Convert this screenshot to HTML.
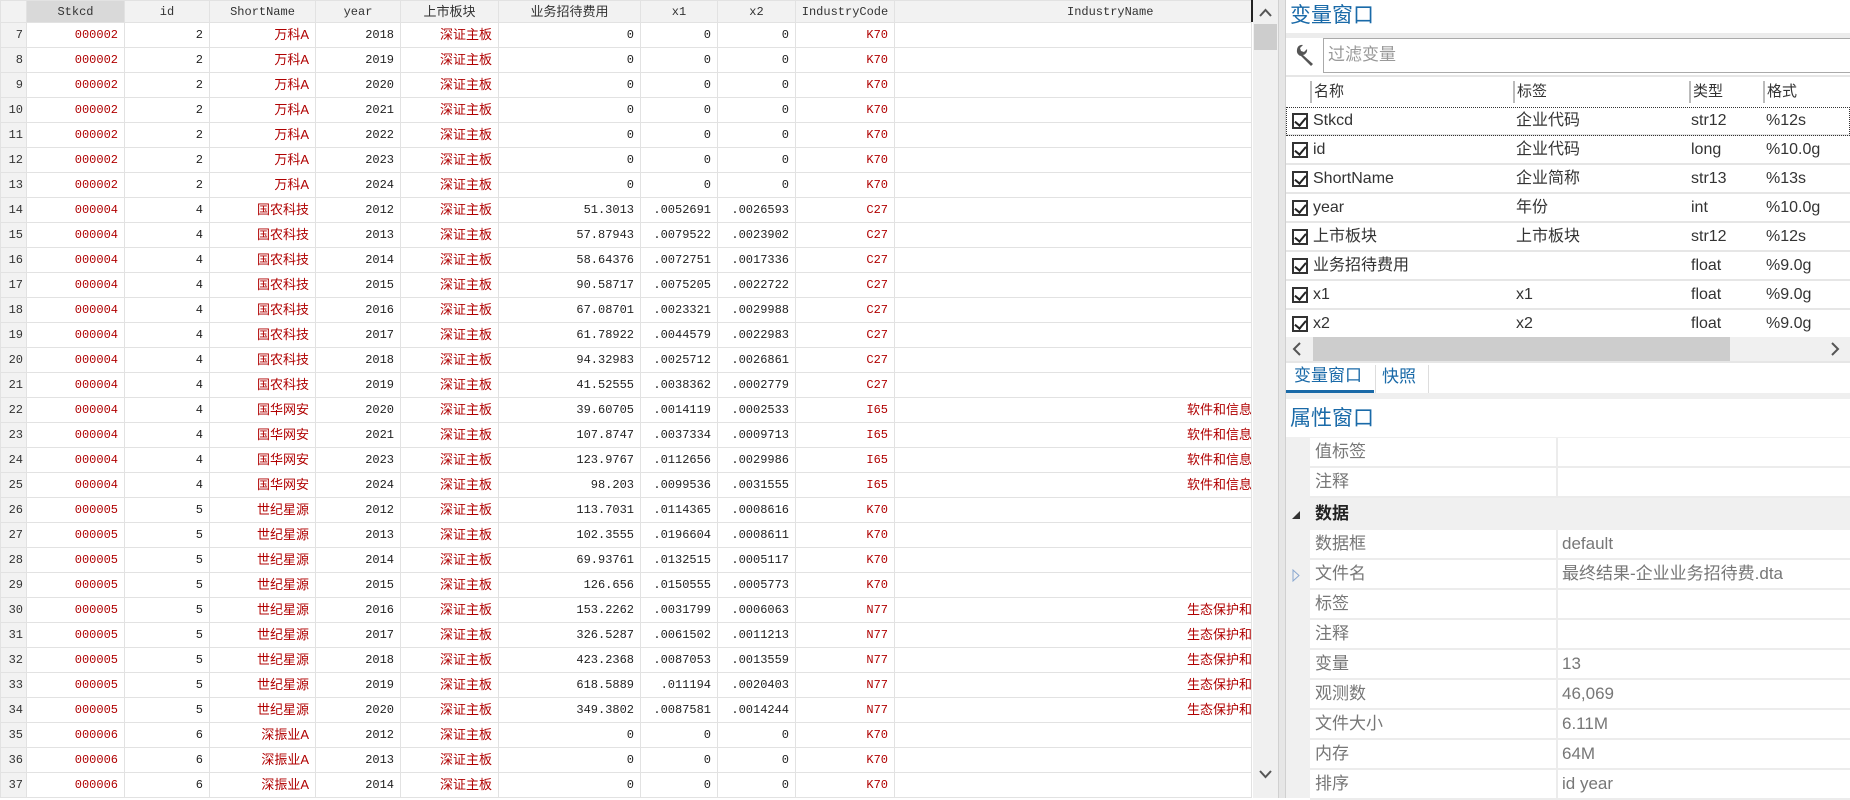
<!DOCTYPE html>
<html><head><meta charset="utf-8">
<style>
*{margin:0;padding:0;box-sizing:border-box}
body{width:1850px;height:798px;overflow:hidden;background:#fff;position:relative;font-family:"Liberation Sans","Noto Sans CJK SC",sans-serif}
#grid{position:absolute;left:0;top:0;width:1252px;height:798px;overflow:hidden;border-right:1px solid #e2e2e2}
table{border-collapse:collapse;table-layout:fixed;width:1330px;font-family:"Liberation Mono","Noto Sans CJK SC",monospace;font-size:12px}
td,th{border:1px solid #e2e2e2;height:25px;line-height:18px;text-align:right;padding:0 6px 0 0;white-space:nowrap;overflow:hidden;color:#222;font-weight:normal}
th{height:22px;background:#f2f2f2;text-align:center;padding:0;color:#333}
th.sel{background:#d9d9d9}
td:first-child{background:#f2f2f2;padding-right:3px;color:#333}
.r{color:#b00000}
.c{font-size:13px;font-family:"Liberation Sans","Noto Sans CJK SC",sans-serif}
td.n{padding-right:13px}
#vs{position:absolute;left:1253px;top:0;width:25px;height:798px;background:#f0f0f0}
#sep{position:absolute;left:1278px;top:0;width:8px;height:798px;background:#e6e6e6;border-left:1px solid #d0d0d0;border-right:1px solid #d0d0d0}
#rp{position:absolute;left:1286px;top:0;width:564px;height:798px;background:#fff}
.title{position:absolute;left:4px;font-size:21px;line-height:28px;color:#1a6aa8}
.band{position:absolute;left:0;width:564px;background:#ececec}
.vr{position:absolute;left:0;width:564px;height:29px;font-size:16px;color:#333;border-bottom:2px solid #e6e6e6}
.vr span{position:absolute;top:3px;line-height:22px;height:22px;display:block}
.cb{position:absolute;left:6px;top:6px;width:16px;height:16px;border:2px solid #333;background:#fff}
.cb:after{content:"";position:absolute;left:3px;top:0px;width:5px;height:9px;border:solid #222;border-width:0 2px 2px 0;transform:rotate(40deg)}
.pr{position:absolute;left:0;width:564px;height:30px;font-size:17px;color:#777}
.pr .n{position:absolute;left:24px;top:0;width:246px;height:30px;border-bottom:2px solid #ececec;padding:0 0 0 5px;line-height:28px;background:#fff}
.pr .v{position:absolute;left:270px;top:0;width:294px;height:30px;border-bottom:2px solid #ececec;border-left:2px solid #ececec;padding:0 0 0 4px;line-height:28px;background:#fff}
</style></head><body>
<div id="grid"><table>
<colgroup><col style="width:26px"><col style="width:98px"><col style="width:85px"><col style="width:106px"><col style="width:85px"><col style="width:98px"><col style="width:142px"><col style="width:77px"><col style="width:78px"><col style="width:99px"><col style="width:436px"></colgroup>
<tr><th></th><th class="sel">Stkcd</th><th>id</th><th>ShortName</th><th>year</th><th class="c">上市板块</th><th class="c">业务招待费用</th><th>x1</th><th>x2</th><th>IndustryCode</th><th style="text-align:left;padding-left:172px">IndustryName</th></tr>
<tr><td>7</td><td class="r">000002</td><td>2</td><td class="r c">万科A</td><td>2018</td><td class="r c">深证主板</td><td>0</td><td>0</td><td>0</td><td class="r">K70</td><td class="r c n">房地产业</td></tr>
<tr><td>8</td><td class="r">000002</td><td>2</td><td class="r c">万科A</td><td>2019</td><td class="r c">深证主板</td><td>0</td><td>0</td><td>0</td><td class="r">K70</td><td class="r c n">房地产业</td></tr>
<tr><td>9</td><td class="r">000002</td><td>2</td><td class="r c">万科A</td><td>2020</td><td class="r c">深证主板</td><td>0</td><td>0</td><td>0</td><td class="r">K70</td><td class="r c n">房地产业</td></tr>
<tr><td>10</td><td class="r">000002</td><td>2</td><td class="r c">万科A</td><td>2021</td><td class="r c">深证主板</td><td>0</td><td>0</td><td>0</td><td class="r">K70</td><td class="r c n">房地产业</td></tr>
<tr><td>11</td><td class="r">000002</td><td>2</td><td class="r c">万科A</td><td>2022</td><td class="r c">深证主板</td><td>0</td><td>0</td><td>0</td><td class="r">K70</td><td class="r c n">房地产业</td></tr>
<tr><td>12</td><td class="r">000002</td><td>2</td><td class="r c">万科A</td><td>2023</td><td class="r c">深证主板</td><td>0</td><td>0</td><td>0</td><td class="r">K70</td><td class="r c n">房地产业</td></tr>
<tr><td>13</td><td class="r">000002</td><td>2</td><td class="r c">万科A</td><td>2024</td><td class="r c">深证主板</td><td>0</td><td>0</td><td>0</td><td class="r">K70</td><td class="r c n">房地产业</td></tr>
<tr><td>14</td><td class="r">000004</td><td>4</td><td class="r c">国农科技</td><td>2012</td><td class="r c">深证主板</td><td>51.3013</td><td>.0052691</td><td>.0026593</td><td class="r">C27</td><td class="r c n">医药制造业</td></tr>
<tr><td>15</td><td class="r">000004</td><td>4</td><td class="r c">国农科技</td><td>2013</td><td class="r c">深证主板</td><td>57.87943</td><td>.0079522</td><td>.0023902</td><td class="r">C27</td><td class="r c n">医药制造业</td></tr>
<tr><td>16</td><td class="r">000004</td><td>4</td><td class="r c">国农科技</td><td>2014</td><td class="r c">深证主板</td><td>58.64376</td><td>.0072751</td><td>.0017336</td><td class="r">C27</td><td class="r c n">医药制造业</td></tr>
<tr><td>17</td><td class="r">000004</td><td>4</td><td class="r c">国农科技</td><td>2015</td><td class="r c">深证主板</td><td>90.58717</td><td>.0075205</td><td>.0022722</td><td class="r">C27</td><td class="r c n">医药制造业</td></tr>
<tr><td>18</td><td class="r">000004</td><td>4</td><td class="r c">国农科技</td><td>2016</td><td class="r c">深证主板</td><td>67.08701</td><td>.0023321</td><td>.0029988</td><td class="r">C27</td><td class="r c n">医药制造业</td></tr>
<tr><td>19</td><td class="r">000004</td><td>4</td><td class="r c">国农科技</td><td>2017</td><td class="r c">深证主板</td><td>61.78922</td><td>.0044579</td><td>.0022983</td><td class="r">C27</td><td class="r c n">医药制造业</td></tr>
<tr><td>20</td><td class="r">000004</td><td>4</td><td class="r c">国农科技</td><td>2018</td><td class="r c">深证主板</td><td>94.32983</td><td>.0025712</td><td>.0026861</td><td class="r">C27</td><td class="r c n">医药制造业</td></tr>
<tr><td>21</td><td class="r">000004</td><td>4</td><td class="r c">国农科技</td><td>2019</td><td class="r c">深证主板</td><td>41.52555</td><td>.0038362</td><td>.0002779</td><td class="r">C27</td><td class="r c n">医药制造业</td></tr>
<tr><td>22</td><td class="r">000004</td><td>4</td><td class="r c">国华网安</td><td>2020</td><td class="r c">深证主板</td><td>39.60705</td><td>.0014119</td><td>.0002533</td><td class="r">I65</td><td class="r c n">软件和信息技术服务业</td></tr>
<tr><td>23</td><td class="r">000004</td><td>4</td><td class="r c">国华网安</td><td>2021</td><td class="r c">深证主板</td><td>107.8747</td><td>.0037334</td><td>.0009713</td><td class="r">I65</td><td class="r c n">软件和信息技术服务业</td></tr>
<tr><td>24</td><td class="r">000004</td><td>4</td><td class="r c">国华网安</td><td>2023</td><td class="r c">深证主板</td><td>123.9767</td><td>.0112656</td><td>.0029986</td><td class="r">I65</td><td class="r c n">软件和信息技术服务业</td></tr>
<tr><td>25</td><td class="r">000004</td><td>4</td><td class="r c">国华网安</td><td>2024</td><td class="r c">深证主板</td><td>98.203</td><td>.0099536</td><td>.0031555</td><td class="r">I65</td><td class="r c n">软件和信息技术服务业</td></tr>
<tr><td>26</td><td class="r">000005</td><td>5</td><td class="r c">世纪星源</td><td>2012</td><td class="r c">深证主板</td><td>113.7031</td><td>.0114365</td><td>.0008616</td><td class="r">K70</td><td class="r c n">房地产业</td></tr>
<tr><td>27</td><td class="r">000005</td><td>5</td><td class="r c">世纪星源</td><td>2013</td><td class="r c">深证主板</td><td>102.3555</td><td>.0196604</td><td>.0008611</td><td class="r">K70</td><td class="r c n">房地产业</td></tr>
<tr><td>28</td><td class="r">000005</td><td>5</td><td class="r c">世纪星源</td><td>2014</td><td class="r c">深证主板</td><td>69.93761</td><td>.0132515</td><td>.0005117</td><td class="r">K70</td><td class="r c n">房地产业</td></tr>
<tr><td>29</td><td class="r">000005</td><td>5</td><td class="r c">世纪星源</td><td>2015</td><td class="r c">深证主板</td><td>126.656</td><td>.0150555</td><td>.0005773</td><td class="r">K70</td><td class="r c n">房地产业</td></tr>
<tr><td>30</td><td class="r">000005</td><td>5</td><td class="r c">世纪星源</td><td>2016</td><td class="r c">深证主板</td><td>153.2262</td><td>.0031799</td><td>.0006063</td><td class="r">N77</td><td class="r c n">生态保护和环境治理业</td></tr>
<tr><td>31</td><td class="r">000005</td><td>5</td><td class="r c">世纪星源</td><td>2017</td><td class="r c">深证主板</td><td>326.5287</td><td>.0061502</td><td>.0011213</td><td class="r">N77</td><td class="r c n">生态保护和环境治理业</td></tr>
<tr><td>32</td><td class="r">000005</td><td>5</td><td class="r c">世纪星源</td><td>2018</td><td class="r c">深证主板</td><td>423.2368</td><td>.0087053</td><td>.0013559</td><td class="r">N77</td><td class="r c n">生态保护和环境治理业</td></tr>
<tr><td>33</td><td class="r">000005</td><td>5</td><td class="r c">世纪星源</td><td>2019</td><td class="r c">深证主板</td><td>618.5889</td><td>.011194</td><td>.0020403</td><td class="r">N77</td><td class="r c n">生态保护和环境治理业</td></tr>
<tr><td>34</td><td class="r">000005</td><td>5</td><td class="r c">世纪星源</td><td>2020</td><td class="r c">深证主板</td><td>349.3802</td><td>.0087581</td><td>.0014244</td><td class="r">N77</td><td class="r c n">生态保护和环境治理业</td></tr>
<tr><td>35</td><td class="r">000006</td><td>6</td><td class="r c">深振业A</td><td>2012</td><td class="r c">深证主板</td><td>0</td><td>0</td><td>0</td><td class="r">K70</td><td class="r c n">房地产业</td></tr>
<tr><td>36</td><td class="r">000006</td><td>6</td><td class="r c">深振业A</td><td>2013</td><td class="r c">深证主板</td><td>0</td><td>0</td><td>0</td><td class="r">K70</td><td class="r c n">房地产业</td></tr>
<tr><td>37</td><td class="r">000006</td><td>6</td><td class="r c">深振业A</td><td>2014</td><td class="r c">深证主板</td><td>0</td><td>0</td><td>0</td><td class="r">K70</td><td class="r c n">房地产业</td></tr>
</table></div>
<div style="position:absolute;left:1251px;top:0;width:2px;height:22px;background:#222"></div>

<div id="vs">
<svg style="position:absolute;left:6px;top:8px" width="13" height="9"><path d="M1 8 L6.5 2 L12 8" fill="none" stroke="#555" stroke-width="2"/></svg>
<div style="position:absolute;left:1px;top:24px;width:23px;height:26px;background:#cdcdcd"></div>
<svg style="position:absolute;left:6px;top:770px" width="13" height="9"><path d="M1 1 L6.5 7 L12 1" fill="none" stroke="#555" stroke-width="2"/></svg>
</div>
<div id="sep"></div>

<div id="rp">
<div class="title" style="top:2px">变量窗口</div>
<div class="band" style="top:33px;height:5px"></div>
<svg style="position:absolute;left:8px;top:44px" width="22" height="22" viewBox="0 0 22 22"><path d="M3 6 A5 5 0 0 1 9 1 L6 4 L7 7 L10 8 L13 5 A5 5 0 0 1 9 11 L19 20 L17 22 L7 12 A5 5 0 0 1 3 6Z" fill="#555"/></svg>
<div style="position:absolute;left:37px;top:38px;width:527px;height:35px;border:1px solid #aaa;border-right:none;font-size:17px;line-height:32px;color:#999;padding:0 0 0 4px">过滤变量</div>
<div style="position:absolute;left:0;top:75px;width:564px;height:2px;background:#e6e6e6"></div>
<div style="position:absolute;left:0;top:77px;width:564px;height:30px;font-size:15px;line-height:22px;color:#333">
<div style="position:absolute;left:24px;top:4px;width:2px;height:22px;background:#bbb"></div><span style="position:absolute;left:28px;top:4px">名称</span>
<div style="position:absolute;left:227px;top:4px;width:2px;height:22px;background:#bbb"></div><span style="position:absolute;left:231px;top:4px">标签</span>
<div style="position:absolute;left:403px;top:4px;width:2px;height:22px;background:#bbb"></div><span style="position:absolute;left:407px;top:4px">类型</span>
<div style="position:absolute;left:477px;top:4px;width:2px;height:22px;background:#bbb"></div><span style="position:absolute;left:481px;top:4px">格式</span>
</div>
<div class="vr" style="top:107px"><div class="cb"></div><span style="left:27px">Stkcd</span><span style="left:230px">企业代码</span><span style="left:405px">str12</span><span style="left:480px">%12s</span></div>
<div style="position:absolute;left:0;top:107px;width:564px;height:29px;border:1px dotted #333"></div>
<div class="vr" style="top:136px"><div class="cb"></div><span style="left:27px">id</span><span style="left:230px">企业代码</span><span style="left:405px">long</span><span style="left:480px">%10.0g</span></div>
<div class="vr" style="top:165px"><div class="cb"></div><span style="left:27px">ShortName</span><span style="left:230px">企业简称</span><span style="left:405px">str13</span><span style="left:480px">%13s</span></div>
<div class="vr" style="top:194px"><div class="cb"></div><span style="left:27px">year</span><span style="left:230px">年份</span><span style="left:405px">int</span><span style="left:480px">%10.0g</span></div>
<div class="vr" style="top:223px"><div class="cb"></div><span style="left:27px">上市板块</span><span style="left:230px">上市板块</span><span style="left:405px">str12</span><span style="left:480px">%12s</span></div>
<div class="vr" style="top:252px"><div class="cb"></div><span style="left:27px">业务招待费用</span><span style="left:405px">float</span><span style="left:480px">%9.0g</span></div>
<div class="vr" style="top:281px"><div class="cb"></div><span style="left:27px">x1</span><span style="left:230px">x1</span><span style="left:405px">float</span><span style="left:480px">%9.0g</span></div>
<div class="vr" style="top:310px;border-bottom:none"><div class="cb"></div><span style="left:27px">x2</span><span style="left:230px">x2</span><span style="left:405px">float</span><span style="left:480px">%9.0g</span></div>
<div style="position:absolute;left:0;top:337px;width:564px;height:24px;background:#f0f0f0">
<svg style="position:absolute;left:6px;top:5px" width="9" height="14"><path d="M8 1 L2 7 L8 13" fill="none" stroke="#555" stroke-width="2"/></svg>
<div style="position:absolute;left:27px;top:0;width:417px;height:24px;background:#cdcdcd"></div>
<svg style="position:absolute;left:545px;top:5px" width="9" height="14"><path d="M1 1 L7 7 L1 13" fill="none" stroke="#555" stroke-width="2"/></svg>
</div>
<div class="band" style="top:361px;height:2px;background:#e6e6e6"></div>
<div style="position:absolute;left:0;top:363px;width:88px;height:30px;border-bottom:3px solid #1a6aa8;font-size:17px;line-height:26px;color:#1a6aa8;padding:0 0 0 8px">变量窗口</div>
<div style="position:absolute;left:89px;top:365px;width:54px;height:28px;border-right:1px solid #ddd;border-left:1px solid #ddd;font-size:17px;line-height:24px;color:#1a6aa8;padding:0 0 0 6px">快照</div>
<div class="band" style="top:393px;height:6px;background:#efefef"></div>
<div class="title" style="top:405px">属性窗口</div>
<div style="position:absolute;left:0;top:437px;width:564px;height:361px;background:#f0f0f0"></div>
<div class="pr" style="top:438px"><div class="n">值标签</div><div class="v"></div></div>
<div class="pr" style="top:468px"><div class="n">注释</div><div class="v"></div></div>
<div class="pr" style="top:500px;color:#222;font-weight:bold"><svg style="position:absolute;left:6px;top:11px" width="9" height="9"><path d="M8 0 L8 8 L0 8Z" fill="#333"/></svg><span style="position:absolute;left:29px;top:0;line-height:28px">数据</span></div>
<div class="pr" style="top:530px"><div class="n">数据框</div><div class="v">default</div></div>
<div class="pr" style="top:560px"><svg style="position:absolute;left:6px;top:9px" width="8" height="13"><path d="M1 1 L7 6.5 L1 12Z" fill="none" stroke="#8aa8d0" stroke-width="1"/></svg><div class="n">文件名</div><div class="v">最终结果-企业业务招待费.dta</div></div>
<div class="pr" style="top:590px"><div class="n">标签</div><div class="v"></div></div>
<div class="pr" style="top:620px"><div class="n">注释</div><div class="v"></div></div>
<div class="pr" style="top:650px"><div class="n">变量</div><div class="v">13</div></div>
<div class="pr" style="top:680px"><div class="n">观测数</div><div class="v">46,069</div></div>
<div class="pr" style="top:710px"><div class="n">文件大小</div><div class="v">6.11M</div></div>
<div class="pr" style="top:740px"><div class="n">内存</div><div class="v">64M</div></div>
<div class="pr" style="top:770px"><div class="n">排序</div><div class="v">id year</div></div>
</div>
</body></html>
